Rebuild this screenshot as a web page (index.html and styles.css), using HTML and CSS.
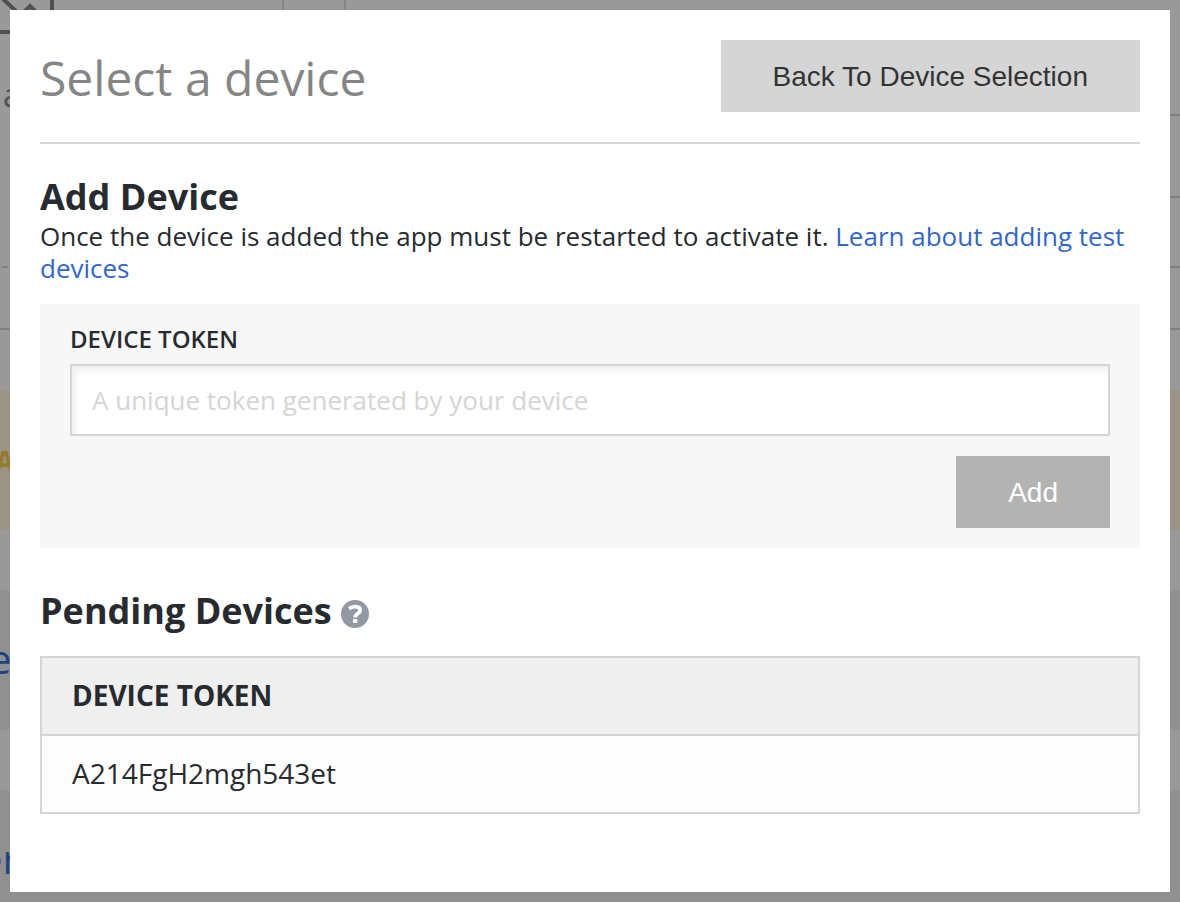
FILE: index.html
```
<!DOCTYPE html>
<html lang="en">

<head>
  <title>Select a device</title>
  <meta charset="UTF-8">
  <meta name="viewport" content="width=device-width, initial-scale=1.0">
  <link rel="stylesheet" href="styles.css">
</head>

<body>

<!-- dimmed page behind the dialog -->
<div class="backdrop" aria-hidden="true">
  <div class="page-top">
    <div class="page-left">
      <svg class="chart-icon" width="60" height="34" viewBox="0 0 60 34">
        <path d="M0 32H52V0" fill="none" stroke="#505050" stroke-width="4"/>
        <path d="M2 -2L18 13M22 14L30 6L38 14" fill="none" stroke="#505050" stroke-width="4"/>
      </svg>
      <span class="page-label">a</span>
      <i class="dash"></i>
    </div>
    <div class="page-tabs"></div>
    <div class="page-right">
      <div class="line line-head"></div>
      <div class="line line-row"></div>
      <div class="line line-sub"></div>
    </div>
  </div>
  <div class="page-foot"></div>
  <div class="band warning">A</div>
  <div class="gap"></div>
  <div class="band item">e</div>
  <div class="gap"></div>
  <div class="band item last">er</div>
</div>

<main class="modal" role="dialog" aria-labelledby="title">
  <header class="modal-header">
    <h1 id="title">Select a device</h1>
    <button class="button back" type="button">Back To Device Selection</button>
  </header>

  <section class="add-device">
    <h2>Add Device</h2>
    <p>Once the device is added the app must be restarted to activate it. <a href="#">Learn about adding test devices</a></p>
    <form class="device-form">
      <label for="token">DEVICE TOKEN</label>
      <input id="token" type="text" placeholder="A unique token generated by your device">
      <button class="button add" type="button">Add</button>
    </form>
  </section>

  <section class="pending">
    <h2>Pending Devices
      <svg class="help" width="28" height="28" viewBox="0 0 28 28" role="img" aria-label="Help">
        <circle cx="14" cy="14" r="14" fill="#9299a3"/>
        <path d="M8 8.8C10 7.2 12 6.6 14.4 6.7C17.6 6.8 19.2 8.2 19.2 10.2C19.2 13.6 14.2 13.4 14.2 17.4" fill="none" stroke="#fff" stroke-width="3.8"/>
        <rect x="12" y="19" width="4.4" height="4" rx="1" fill="#fff"/>
      </svg>
    </h2>
    <table>
      <thead>
        <tr><th>DEVICE TOKEN</th></tr>
      </thead>
      <tbody>
        <tr><td>A214FgH2mgh543et</td></tr>
      </tbody>
    </table>
  </section>
</main>

</body>

</html>
```
FILE: styles.css
```
* {
  box-sizing: border-box;
}

body {
  margin: 0;
  padding: 10px;
  background: #909090;
  color: #272b30;
  font-family: "Open Sans", sans-serif;
  font-size: 26px;
  line-height: 32px;
}

/* page behind */
.backdrop {
  position: absolute;
  inset: 0;
  display: flex;
  flex-direction: column;
  overflow: hidden;
  background: #999;
}

.page-top {
  display: flex;
  flex: none;
  height: 328px;
}

.page-left {
  display: flex;
  flex-direction: column;
  width: 284px;
  border-right: 2px solid #858585;
}

.chart-icon {
  flex: none;
}

.page-label {
  height: 230px;
  padding: 44px 0 0 3px;
  color: #505050;
  font-size: 32px;
  line-height: 34px;
}

.dash {
  width: 6px;
  height: 2px;
  margin: 2px 0 0 2px;
  background: #808080;
}

.page-tabs {
  width: 62px;
  border-right: 2px solid #858585;
}

.page-right {
  flex: 1;
}

.line {
  border-bottom: 2px solid #808080;
}

.line-head {
  height: 116px;
}

.line-row {
  height: 82px;
}

.line-sub {
  height: 70px;
}

.page-foot {
  flex: none;
  height: 62px;
  border-top: 2px solid #808080;
}

.band {
  flex: none;
  height: 140px;
  line-height: 138px;
}

.warning {
  background: #999484;
  color: #957a30;
  font-size: 28px;
  font-weight: 700;
  line-height: 142px;
  text-indent: -5px;
}

.gap {
  flex: none;
  height: 60px;
}

.item {
  background: #909090;
  color: #1e4384;
  font-size: 40px;
  text-indent: -11px;
}

.last {
  flex: 1 0 140px;
  text-indent: -20px;
}

/* dialog */
.modal {
  position: relative;
  min-height: calc(100vh - 20px);
  padding: 30px;
  background: #fff;
}

.modal-header {
  display: flex;
  justify-content: space-between;
  padding-bottom: 26px;
  border-bottom: 2px solid #d5d5d5;
}

h1 {
  margin: 0;
  color: #858585;
  font-size: 48px;
  font-weight: 400;
  line-height: 76px;
}

.button {
  height: 72px;
  padding: 2px 52px 0;
  border: none;
  font-family: "Liberation Sans", Arial, sans-serif;
  font-size: 28px;
  cursor: pointer;
}

.back {
  background: #d5d5d5;
  color: #333;
}

.add-device {
  padding-top: 32px;
}

h2 {
  margin: 0 0 2px;
  font-size: 36px;
  font-weight: 700;
  line-height: 42px;
}

p {
  margin: 0 0 20px;
}

a {
  color: #3267c8;
  text-decoration: none;
}

.device-form {
  display: flex;
  flex-direction: column;
  padding: 20px 30px;
  background: #f7f7f7;
}

label {
  margin-bottom: 10px;
  font-size: 24px;
  font-weight: 600;
  line-height: 30px;
}

input {
  width: 100%;
  height: 72px;
  padding: 0 20px;
  border: 2px solid #d5d5d5;
  border-radius: 0;
  background: #fff;
  box-shadow: inset 4px 4px 6px #f0f0f0;
  font-family: inherit;
  font-size: 26px;
}

input::placeholder {
  color: #d5d5d5;
}

.add {
  align-self: flex-end;
  margin-top: 20px;
  background: #b3b3b3;
  color: #fff;
}

.pending {
  padding-top: 42px;
}

.help {
  vertical-align: -4px;
}

table {
  width: 100%;
  margin-top: 24px;
  border-collapse: collapse;
  font-size: 28px;
}

th,
td {
  height: 78px;
  padding: 0 30px 2px;
  border: 2px solid #d5d5d5;
  text-align: left;
}

th {
  background: #efefef;
}

td {
  background: #fdfdfd;
}
```
